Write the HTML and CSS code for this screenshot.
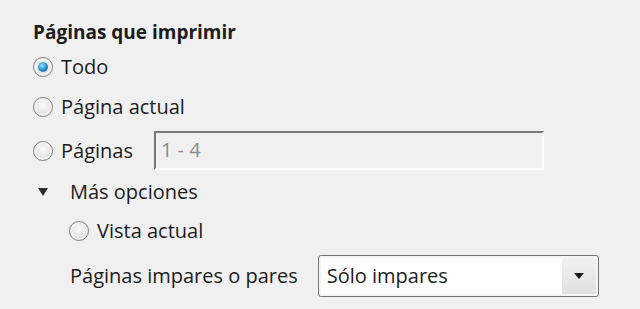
FILE: index.html
```html
<!DOCTYPE html>
<html lang="es">
<head>
    <meta charset="UTF-8">
    <title>Imprimir</title>
    <link rel="stylesheet" href="styles.css">
</head>
<body>
    <section class="print-range">
        <h2 class="title">Páginas que imprimir</h2>
        <div class="row row-all">
            <span class="radio checked"></span>
            <span class="label">Todo</span>
        </div>
        <div class="row row-current">
            <span class="radio"></span>
            <span class="label">Página actual</span>
        </div>
        <div class="row row-pages">
            <span class="radio"></span>
            <span class="label">Páginas</span>
            <div class="range-input">1 - 4</div>
        </div>
        <div class="row row-more">
            <span class="expander"></span>
            <span class="label">Más opciones</span>
        </div>
        <div class="row row-view">
            <span class="radio"></span>
            <span class="label">Vista actual</span>
        </div>
        <div class="row row-odd">
            <span class="label">Páginas impares o pares</span>
            <div class="combo">
                <span class="combo-value">Sólo impares</span>
                <span class="combo-button"><span class="combo-arrow"></span></span>
            </div>
        </div>
    </section>
</body>
</html>
```

FILE: styles.css
```css
body {
    margin: 0;
    background-color: #f0f0f0;
    color: #1c1c1c;
    font-family: "Open Sans", "Noto Sans", sans-serif;
    font-size: 20px;
}
.print-range {
    padding: 20px 0 0 33px;
}
.title {
    margin: 0;
    height: 24px;
    line-height: 24px;
    font-size: 19px;
    font-weight: 700;
}
.row {
    display: flex;
    align-items: center;
}
.label {
    line-height: 20px;
}
.radio {
    position: relative;
    box-sizing: border-box;
    width: 20px;
    height: 20px;
    margin-right: 8px;
    border: 1px solid #8a8a8a;
    border-radius: 50%;
    background: radial-gradient(circle at 50% 40%, #fbfbfb 0%, #e4e4e4 55%, #c9c9c9 100%);
    box-shadow: inset 0 0 0 2px #f4f4f4, 0 0 1px #b0b0b0;
}
.radio.checked::after {
    content: "";
    position: absolute;
    left: 4px;
    top: 4px;
    width: 10px;
    height: 10px;
    border-radius: 50%;
    background: radial-gradient(circle at 40% 35%, #9fe2ff 0%, #2a8fd0 50%, #0e4f86 100%);
}
.row-all {
    height: 20px;
    margin-top: 13px;
}
.row-current {
    height: 20px;
    margin-top: 20px;
}
.row-pages {
    height: 39px;
    margin-top: 14px;
}
.range-input {
    box-sizing: border-box;
    width: 390px;
    height: 39px;
    margin-left: 21px;
    padding: 2px 0 0 5px;
    border-top: 2px solid #7a7a7a;
    border-left: 2px solid #7a7a7a;
    border-right: 2px solid #fdfdfd;
    border-bottom: 2px solid #fdfdfd;
    color: #8a8a8a;
    line-height: 30px;
}
.row-more {
    height: 20px;
    margin-top: 12px;
}
.expander {
    width: 0;
    height: 0;
    margin: 0 22px 0 5px;
    border-left: 5px solid transparent;
    border-right: 5px solid transparent;
    border-top: 8px solid #2b2b2b;
}
.row-view {
    height: 20px;
    margin-top: 19px;
    padding-left: 36px;
}
.row-odd {
    height: 42px;
    margin-top: 14px;
    padding-left: 37px;
}
.combo {
    box-sizing: border-box;
    display: flex;
    width: 281px;
    height: 42px;
    margin-left: 20px;
    padding: 2px;
    border: 1px solid #737373;
    border-radius: 3px;
    background: #f4f4f4;
}
.combo-value {
    flex: 1;
    padding-left: 6px;
    background: #ffffff;
    line-height: 36px;
}
.combo-button {
    display: flex;
    align-items: center;
    justify-content: center;
    width: 34px;
    background: linear-gradient(#f2f2f2, #e0e0e0);
}
.combo-arrow {
    width: 0;
    height: 0;
    border-left: 5px solid transparent;
    border-right: 5px solid transparent;
    border-top: 6px solid #1a1a1a;
}
```
